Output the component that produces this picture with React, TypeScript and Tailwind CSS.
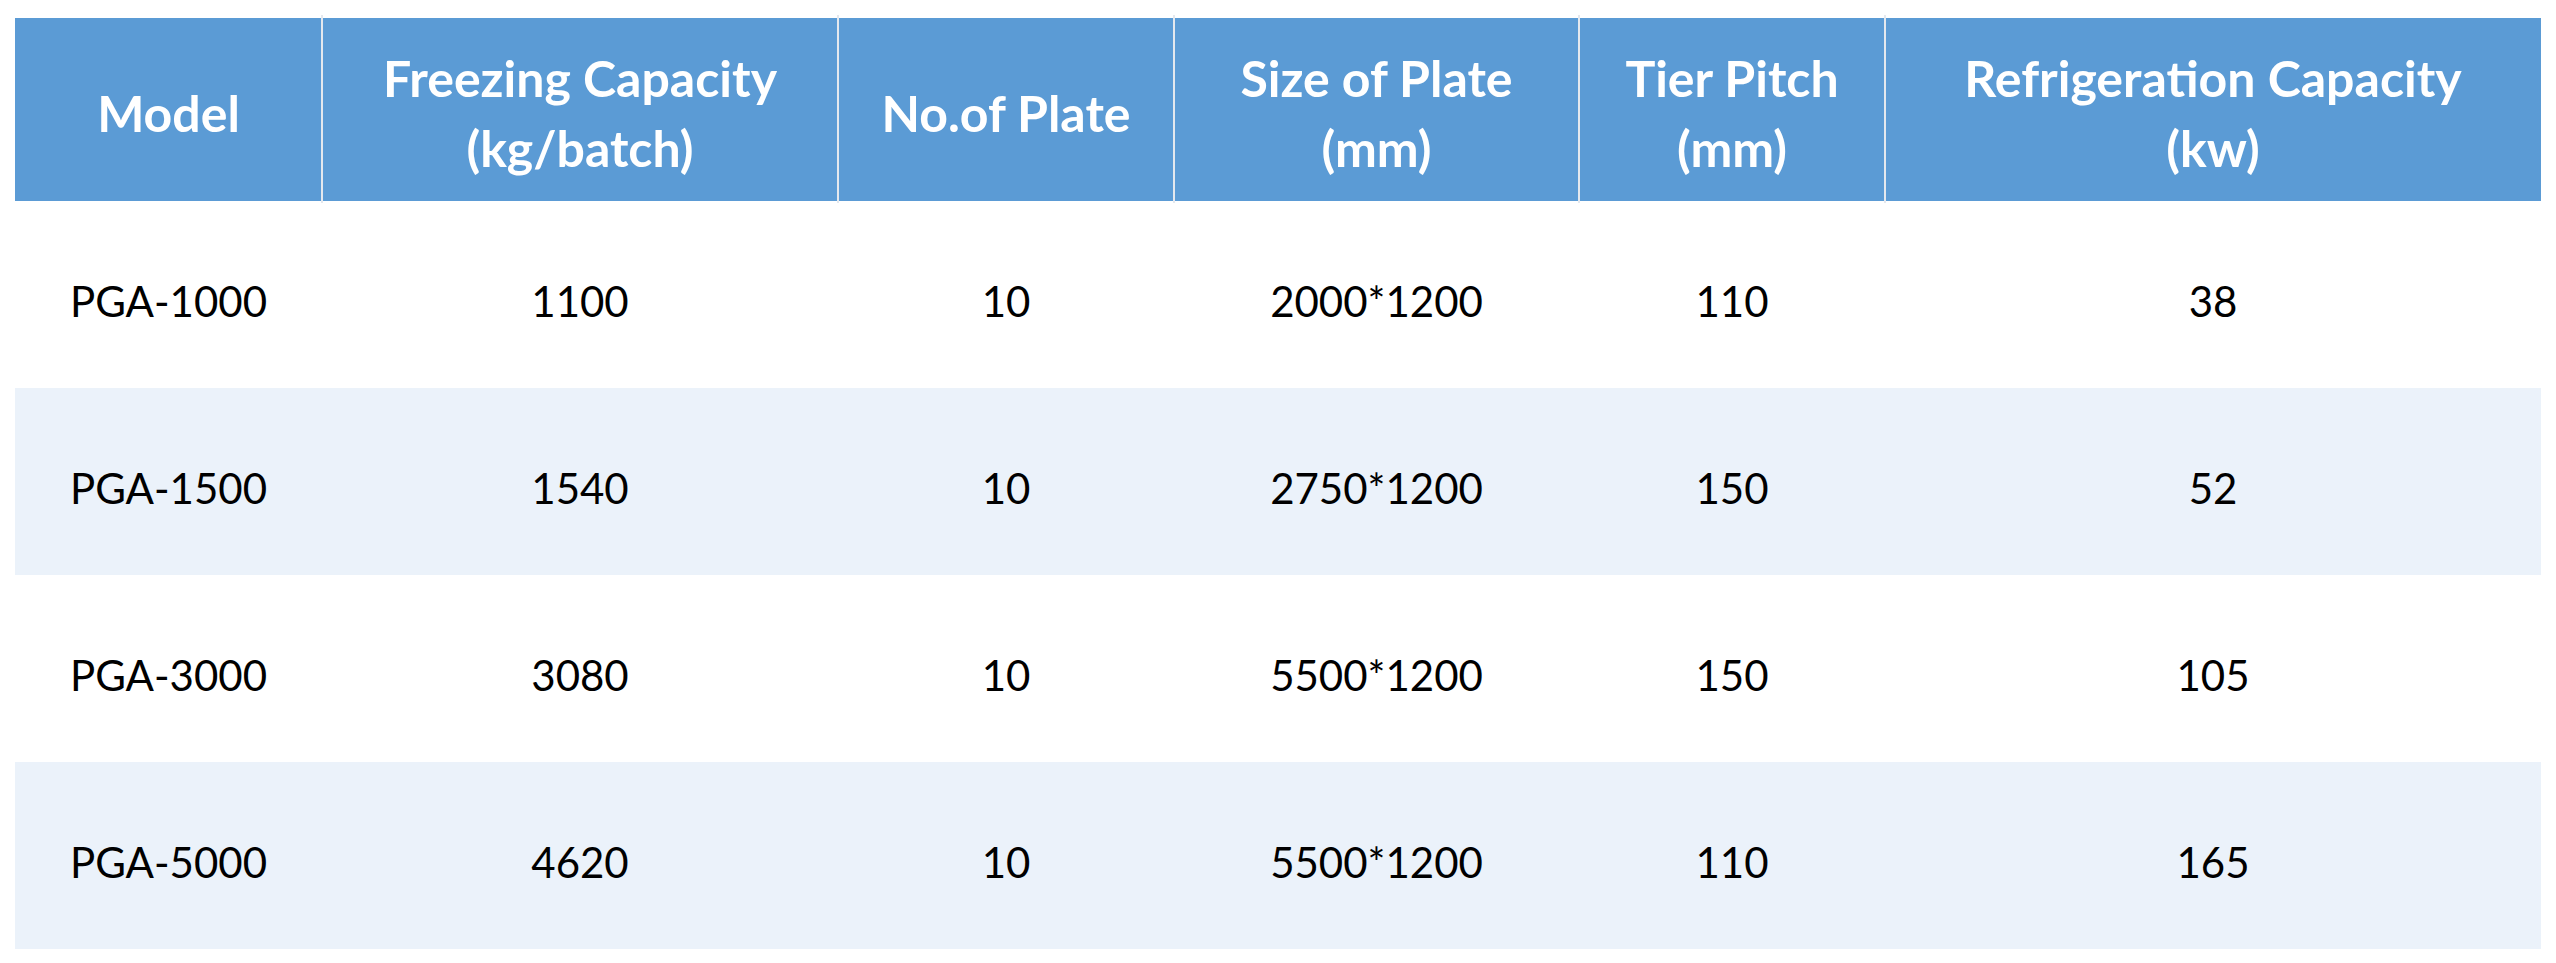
import React from "react";

const columns = [
  { label: ["Model"], width: "w-[307px]" },
  { label: ["Freezing Capacity", "(kg/batch)"], width: "w-[516px]" },
  { label: ["No.of Plate"], width: "w-[336px]" },
  { label: ["Size of Plate", "(mm)"], width: "w-[405px]" },
  { label: ["Tier Pitch", "(mm)"], width: "w-[306px]" },
  { label: ["Refrigeration Capacity", "(kw)"], width: "w-[656px]" },
];

const rows = [
  ["PGA-1000", "1100", "10", "2000*1200", "110", "38"],
  ["PGA-1500", "1540", "10", "2750*1200", "150", "52"],
  ["PGA-3000", "3080", "10", "5500*1200", "150", "105"],
  ["PGA-5000", "4620", "10", "5500*1200", "110", "165"],
];

export default function App() {
  return (
    <div className="w-[2556px] h-[963px] bg-white font-['Lato',sans-serif] pt-[18px] pl-[15px]">
      <div className="w-[2526px]">
        {/* header */}
        <div className="flex h-[183px] bg-[#5b9bd5]">
          {columns.map((col, i) => (
            <div
              key={i}
              className={`${col.width} relative flex flex-col items-center justify-center text-white font-bold text-[50px] leading-[70px] pt-[6px]`}
            >
              {i > 0 && (
                <span className="absolute left-[-1px] top-[-3px] bottom-[-2px] w-[2px] bg-[#e4e8ee]" />
              )}
              {col.label.map((line) => (
                <span key={line}>{line}</span>
              ))}
            </div>
          ))}
        </div>

        {/* body */}
        {rows.map((row, r) => (
          <div
            key={r}
            className={`flex h-[187px] ${r % 2 === 1 ? "bg-[#ebf2fa]" : "bg-white"}`}
          >
            {row.map((cell, c) => (
              <div
                key={c}
                className={`${columns[c].width} flex items-center justify-center text-black text-[42px] pt-[14px]`}
              >
                {cell}
              </div>
            ))}
          </div>
        ))}
      </div>
    </div>
  );
}
